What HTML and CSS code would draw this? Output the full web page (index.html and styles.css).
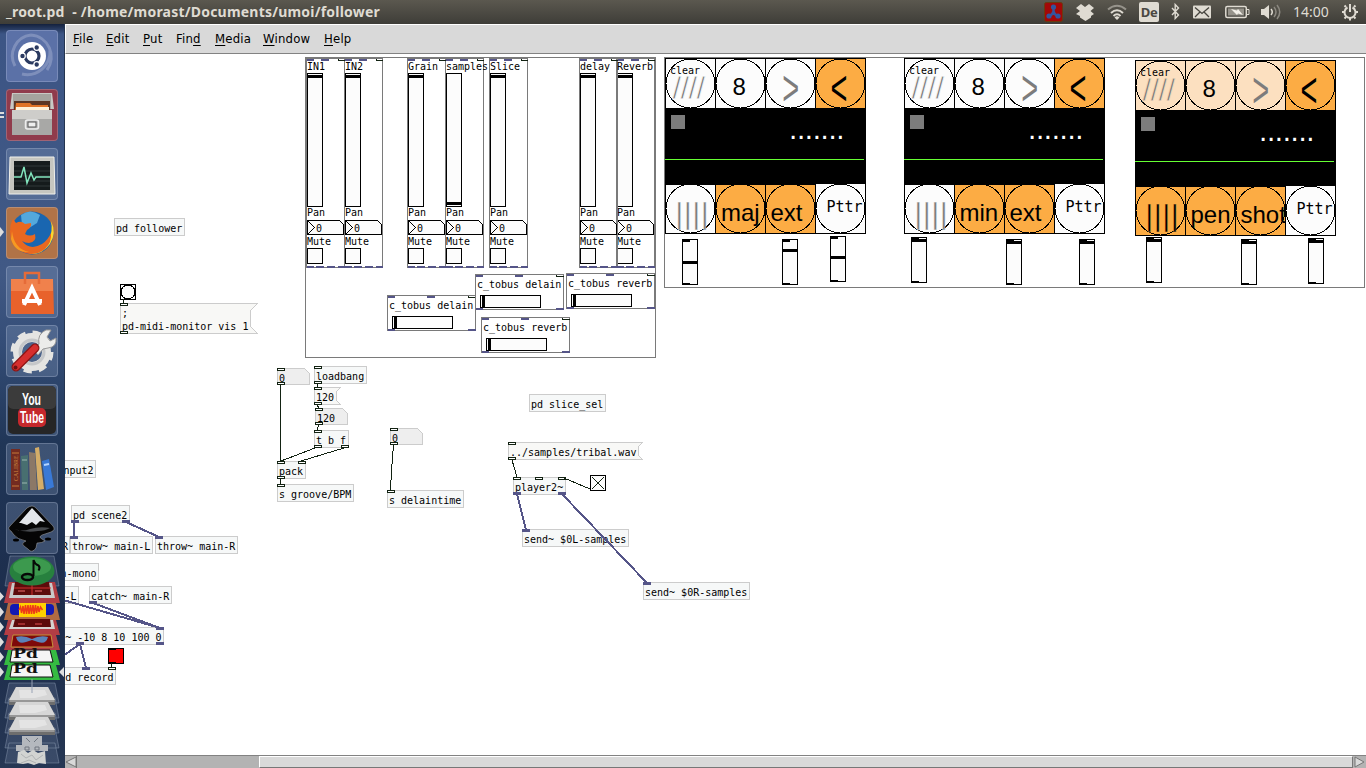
FILE: index.html
```html
<!DOCTYPE html>
<html lang="en">
<head>
<meta charset="utf-8">
<title>_root.pd - /home/morast/Documents/umoi/follower</title>
<link rel="stylesheet" href="styles.css">
</head>
<body>
<header class="panel">
  <h1 class="panel-title">_root.pd&nbsp; - /home/morast/Documents/umoi/follower</h1>
  <div class="tray">
    <svg width="20" height="20" viewBox="0 0 20 20"><rect x=".5" y=".5" width="18" height="19" rx="2" fill="#a30808" stroke="#6b3a10"/><path d="M9.500 3v8M9.500 11l-5 4M9.500 11l5 4" stroke="#34549c" stroke-width="2.500"/><g fill="#34549c"><circle cx="9.500" cy="5" r="2.600"/><circle cx="5" cy="14" r="2.600"/><circle cx="14" cy="14" r="2.600"/><circle cx="9.500" cy="11" r="2"/></g></svg>
    <svg width="20" height="20" viewBox="0 0 20 20"><path d="M5 2l4 3 4-3 5 4-3.500 3L18 12l-3 2v1.500L9.500 19 4 15.500V14l-4-2 4-3-4-3z" fill="#dfdbd2"/></svg>
    <svg width="21" height="20" viewBox="0 0 21 20" fill="none" stroke-width="2"><path d="M1 7.500Q10 0 19 7.500" stroke="#96938b"/><path d="M4 11Q10 5.500 16 11M6.500 14Q10 10.500 13.500 14" stroke="#dfdbd2"/><path d="M7.500 15.500Q10 13 12.500 15.500L10 18z" fill="#dfdbd2" stroke="none"/></svg>
    <span class="keyboard">De</span>
    <svg width="10" height="20" viewBox="0 0 10 20"><path d="M1 6l6.500 7L4.200 16.500v-14L7.500 6 1 13" fill="none" stroke="#dfdbd2" stroke-width="1.400"/></svg>
    <svg width="19" height="20" viewBox="0 0 19 20"><rect y="3.500" width="18" height="13" rx="1" fill="#dfdbd2"/><path d="M2 5.500l7 6 7-6M2 15l5-5M16 15l-5-5" fill="none" stroke="#45433d" stroke-width="1.300"/></svg>
    <svg width="25" height="20" viewBox="0 0 25 20"><rect x=".8" y="4.500" width="20.500" height="11" rx="1.500" fill="none" stroke="#dfdbd2" stroke-width="1.500"/><rect x="3" y="6.500" width="16" height="7" fill="#96938b"/><path d="M22 7.500h2v5h-2" fill="none" stroke="#dfdbd2"/><path d="M6 7l6 1.500 1-1.500 5 6-5-1.500L12 13z" fill="#f2efe8"/></svg>
    <svg width="20" height="20" viewBox="0 0 20 20"><path d="M0 7h3l5-4v14l-5-4H0z" fill="#dfdbd2"/><path d="M10 7q2.500 3 0 6" fill="none" stroke="#dfdbd2" stroke-width="1.500"/><path d="M13 5q4 5 0 10M16 3q5.500 7 0 14" fill="none" stroke="#8b8880" stroke-width="1.500"/></svg>
    <span class="clock">14:00</span>
    <svg width="17" height="20" viewBox="0 0 17 20" fill="none" stroke="#dfdbd2"><path d="M5.500 5.500a5.500 5.500 0 1 0 5 0" stroke-width="2"/><path d="M8 2v8" stroke-width="2"/><path d="M2.500 3.500L4 5M13.500 3.500L12 5M0 10h2M14 10h2M2.500 16.500L4 15M13.500 16.500L12 15M8 16v2.500" stroke-width="2"/></svg>
  </div>
</header>
<div class="desktop">
  <aside class="launcher">
    <svg class="tile dash" viewBox="0 0 52 52"><path d="M9 36A21 21 0 0 1 25 5M16 44A23 23 0 0 0 44 20M25 5a22 22 0 0 1 16 35" fill="none" stroke="#bfc9e2" stroke-opacity=".35" stroke-width="3"/><circle cx="26" cy="26" r="14" fill="#fff"/><circle cx="26" cy="26" r="7" fill="none" stroke="#2b3a60" stroke-width="3.200"/><g fill="#2b3a60" stroke="#fff" stroke-width="1.200"><circle cx="16.500" cy="26" r="2.800"/><circle cx="30.700" cy="17.500" r="2.800"/><circle cx="30.700" cy="34.500" r="2.800"/></g></svg>
    <svg class="tile files" viewBox="0 0 52 52"><path d="M6 4h40l2 16H4z" fill="#c9c8c4"/><path d="M7 5h38v15H7z" fill="#a5a39e"/><path d="M8 12h36v9H8z" fill="#5a3524"/><path d="M10 14h14l2 2h16v5H9z" fill="#e07327"/><path d="M10 18h33v4H10z" fill="#fff1d8"/><path d="M6 21h40v25H6z" fill="#a8a8a6"/><path d="M6 21h40v9H6z" fill="#cecdca"/><rect x="19.500" y="31" width="13" height="9" rx="2" fill="#bbb" stroke="#ececec" stroke-width="1.500"/><rect x="22" y="33" width="8" height="5" fill="#eee" stroke="#555"/></svg>
    <svg class="tile" viewBox="0 0 52 52"><path d="M4 9h44l1 37H3z" fill="#c6c6c0" stroke="#f0f0ec"/><path d="M8 13h36v29H8z" fill="#151b1c"/><path d="M8 18h36M8 23h36M8 28h36M8 33h36M8 38h36" stroke="#303939"/><path d="M8 29h7l3-10 3 16 4-10 3 7 2-3h14" fill="none" stroke="#82e5bd" stroke-width="1.500"/></svg>
    <svg class="tile firefox" viewBox="0 0 52 52"><circle cx="26" cy="26" r="21.500" fill="#1a66b0"/><path d="M15 8q9-7 19 0l-3 8-8 5-7-3z" fill="#53a8dc"/><path d="M45 14q6 12-1 23-8 11-21 10 14-4 20-15 4-8 2-18z" fill="#ffd62a"/><path d="M7 12l3 4q5-3 9 1l6-1q1 4-4 7l-2 4q5 3 10 0 2 8-6 9-4 0-7-2 8 10 20 3 6-4 9-11 1 9-6 16-9 7-20 4Q4 41 4 25q0-8 3-13z" fill="#e96820"/><path d="M6 24q2 18 17 21-14 1-18-13z" fill="#f79a22"/></svg>
    <svg class="tile" viewBox="0 0 52 52"><path d="M5 13h42l1 35H5z" fill="#e8622b"/><path d="M5 13h42v12H5z" fill="#f0814c"/><path d="M19 18V7h14v11" fill="none" stroke="#e66b38" stroke-width="2.500"/><path d="M18 39l8-17 8 17M16 35h20" fill="none" stroke="#fff" stroke-width="4"/></svg>
    <svg class="tile" viewBox="0 0 52 52"><circle cx="26" cy="27" r="14.500" fill="none" stroke="#e4e4e2" stroke-width="9"/><circle cx="26" cy="27" r="19" fill="none" stroke="#e4e4e2" stroke-width="5" stroke-dasharray="8 6.920"/><circle cx="26" cy="27" r="12" fill="none" stroke="#c5c7c9" stroke-width="3"/><path d="M28 25l5-6q-2-10 7-14l5 0-4 7 3 4 6-3q1 9-8 10l-5 1-5 6z" fill="#ececea" stroke="#999"/><path d="M10 42l19-19" stroke="#8d1515" stroke-width="9" stroke-linecap="round"/><path d="M10 42l19-19" stroke="#d52e2e" stroke-width="6.500" stroke-linecap="round"/><circle cx="9.500" cy="42.500" r="2" fill="#701010"/></svg>
    <svg class="tile" viewBox="0 0 52 52"><rect x="2" y="2" width="48" height="48" rx="5" fill="#262626"/><rect x="2" y="2" width="48" height="23" rx="5" fill="#3b3b3b"/><rect x="12" y="24" width="28" height="19" rx="5" fill="#c5282c"/><text x="16" y="21" class="yt" textLength="19" lengthAdjust="spacingAndGlyphs">You</text><text x="14" y="39" class="yt" textLength="24" lengthAdjust="spacingAndGlyphs">Tube</text></svg>
    <svg class="tile" viewBox="0 0 52 52"><path d="M5 6h9v41H5z" fill="#732b20"/><path d="M6 10h7M6 43h7" stroke="#c77b3b"/><path d="M15 13l7-1v35h-6z" fill="#486f70"/><path d="M16 17h5M16 40h5" stroke="#9bb8b0"/><path d="M23 9l6 1 2 37h-7z" fill="#8b7867"/><path d="M29 5l4-1 5 42-6 1z" fill="#d4ad68"/><path d="M36 18l7-2 5 28-8 3z" fill="#3979d6"/><path d="M38 22l5-1" stroke="#b4d4ff" stroke-width="2"/><text class="spine" transform="translate(12 38) rotate(-90)">CALIBRE</text></svg>
    <svg class="tile" viewBox="0 0 52 52"><path d="M26 4q2 0 4 2l17 18q3 4-2 6l-9 3q-4 2 0 4l3 2q-3 2-8 2l-1 5q-4 6-8 1l-4-3q-3-2 0-4l2-1q-9-2-12-6L5 29q-4-2-1-5L21 6q3-2 5-2z" fill="#050505" stroke="#aaa" stroke-opacity=".5"/><path d="M26 6l13 14-5-1-4 4-4-3-5 3-6-2-2 0z" fill="#e3e6ea"/><path d="M8 27q8 3 16 0 10-3 20-1-5 3-12 3-12 2-24-2z" fill="#46494d"/><ellipse cx="10" cy="38" rx="3" ry="1.500"/><ellipse cx="42" cy="37" rx="3" ry="1.500"/></svg>
    <svg class="stack" viewBox="0 554 65 214">
      <path class="glass" d="M10 556h44l5 30H5z"/>
      <path d="M9 582h46l5 21H4z" fill="#b33d44"/>
      <path d="M12 583h40l3 15H9z" fill="#c9c9c9"/><path d="M15 582h34l2 13H13z" fill="#5c0b0b"/><path d="M32 582v13M14 588h37" stroke="#d03030"/><path d="M18 591h7M35 591h7" stroke="#ec7070"/>
      <ellipse cx="32" cy="571" rx="22.500" ry="14.500" fill="#27803e"/><ellipse cx="32" cy="567" rx="19" ry="9" fill="#3c994e"/>
      <path d="M33.500 576V560q1 4 5 5.500 2 2 0 5" fill="none" stroke="#060806" stroke-width="2"/><ellipse cx="27.500" cy="577" rx="5.500" ry="3" fill="none" stroke="#060806" stroke-width="2.500"/>
      <path d="M8 603h48l4 17H4z" fill="#b06b42"/><rect x="10" y="604" width="44" height="11" rx="4" fill="#1219b2"/><path d="M19 603h27v14H19z" fill="#ffd000"/><path d="M19 610l1.500-3 1 6 1.500-7 1 8 1.500-9 1 9 1.500-9 1 9 1.500-9 1 9 1.500-9 1 9 1.500-9 1 8 1.500-7 1 6 1.500-5 2 3" fill="none" stroke="#ee3a19" stroke-width="1.500"/>
      <path d="M8 620h48l4 15H4z" fill="#b33d44"/><path d="M12 620h41l2 9H9z" fill="#d5d2d0"/><path d="M15 619h35l1 8H13z" fill="#5c0b0b"/><path d="M18 624h7M35 624h7" stroke="#e05050"/>
      <path d="M8 635h48l4 15H4z" fill="#b33d44"/><path d="M13 635h38l2 12H11z" fill="#7e0909" stroke="#c29339"/><path d="M16 637q8-2 16 2 8-4 16-2-2 8-10 5l-6-2-6 2q-8 3-10-5z" fill="#5b82b8"/>
      <path d="M8 650h48l4 15H4z" fill="#35bb42"/><path d="M12 650h38l3 12H10z" fill="#f5f5f5" stroke="#111"/>
      <path d="M8 665h48l4 15H4z" fill="#35bb42"/><path d="M12 665h38l3 12H10z" fill="#f5f5f5" stroke="#111"/>
      <text x="13" y="658" class="pd" textLength="25" lengthAdjust="spacingAndGlyphs">Pd</text><text x="13" y="673" class="pd" textLength="25" lengthAdjust="spacingAndGlyphs">Pd</text>
      <path class="glass" d="M9 683h46l4 20H5zM9 698h46l4 20H5zM9 713h46l4 20H5zM9 728h46l4 20H5zM9 743h46l4 20H5z"/>
      <g id="drive"><path d="M16 687h32l7 13v5H9v-5z" fill="#6d6d6d"/><path d="M16 687h32l7 13H9z" fill="#d6d6d6"/><path d="M19 690h26l2 5-12 3H20z" fill="#e4e4e4"/><path d="M9.500 701h45" stroke="#c4c4c4"/></g>
      <use href="#drive" y="15"/><use href="#drive" y="30"/>
      <path d="M32 679v14" stroke="#98a2b5"/>
      <path d="M22 736h20v9H22zM16 745h32v6H16z" fill="#b4b8be"/><path d="M26 738l4 4M38 738l-4 4M25 747h4v3h-4zM35 747h4v3h-4z" fill="none" stroke="#707780"/><path d="M18 752l6-2 4 3 5-3 5 3 7-2 1 13-7-1-5 2-6-2-5 1-6-1z" fill="#d2d4d2"/><path d="M21 754l5 4 6-3 4 5 7-5M21 763l8-3 7 3" stroke="#b0b3b4" fill="none"/>
      <g fill="#dedede"><path d="M0 592l4 4.500-4 4.500zM0 607l4 5-4 5zM0 622l4 5-4 5zM0 637l4 5-4 5zM0 652l4 5-4 5zM0 667l4 5-4 5zM64 667l-5 5 5 5z"/></g>
    </svg>
    <svg class="running" viewBox="0 0 6 130"><path d="M0 3h4M0 7h4" stroke="#ddd" stroke-width="2"/><path d="M0 117l4 5-4 5z" fill="#ddd"/></svg>
  </aside>
  <main class="window">
    <nav class="menubar"><span><u>F</u>ile</span><span><u>E</u>dit</span><span><u>P</u>ut</span><span>Fin<u>d</u></span><span><u>M</u>edia</span><span><u>W</u>indow</span><span><u>H</u>elp</span></nav>
    <svg class="patch" viewBox="65 54 1301 701">
      <defs>
        <g id="nlet"><rect x="0" y="0" width="7" height="2" class="nlet"/></g>
        <g id="sig"><rect x="-.500" y="-.500" width="8" height="3" class="sig"/></g>
        <g id="strip">
          <rect width="38" height="209" class="gop"/>
          <path d="M.500 1.500h7M14.500 1.500h8" class="sigline"/><path d="M31.500 .500v1.500h7" class="line"/>
          <path d="M.500 208.500h7M9.500 208.500h8M20.500 208.500h8M31 208.500h7" class="sigline"/>
          <rect x="1" y="15" width="15" height="133" class="ctl"/>
          <path d="M1 162h32l4 4v10H1zM1 162l7 7-7 7" class="ctl"/>
          <rect x="1" y="190" width="15" height="15" class="ctl"/>
          <text x=".500" y="157.500">Pan</text><text x="9.500" y="173.500">0</text><text x=".500" y="186.500">Mute</text>
        </g>
        <g id="knob"><rect x="1.500" y="16.500" width="14" height="3"/></g>
        <g id="bus">
          <rect width="88" height="35" class="gop white"/>
          <path d="M0 1.500h7.500M39.500 1.500h8M0 34h7.500M80.500 34h7.500" class="sigline"/><path d="M81 0v2h7" class="line"/>
          <rect x="5" y="21" width="60" height="12" class="ctl"/><rect x="6.500" y="21" width="3" height="12"/>
        </g>
        <g id="cell"><rect width="50" height="50"/><circle cx="25" cy="25" r="24.500"/></g>
        <g id="screen">
          <rect x="-.500" y="49.500" width="201" height="76.500" fill="#000"/>
          <rect x="5.500" y="56.500" width="14" height="14" fill="#7c7c7c"/>
          <path d="M-.500 101h199" stroke="#66ff33"/>
          <text x="122.500" y="80.500" class="dots" textLength="57.500">.......</text>
          <text x="4.500" y="15.500" textLength="30">clear</text>
          <text x="7" y="40" class="slashes dim" textLength="32.500">////</text>
          <text x="67" y="36.500" class="big">8</text>
          <text class="chev dim" transform="translate(116.700 46) scale(1 1.700)">&gt;</text>
          <text class="chev" transform="translate(165 46) scale(1 1.700)">&lt;</text>
        </g>
        <g id="pttr"><use href="#cell" x="150" y="125" class="pale"/><text x="161" y="153" class="pttr">Pttr</text></g>
        <g id="vs"><rect width="15" height="45" class="ctl"/><path d="M0 1h7.500M0 44.500h7.500" class="thick"/></g>
      </defs>

      <rect x="305.500" y="57.500" width="350" height="300" class="gop"/>
      <use href="#strip" x="616.500" y="58.500"/><use href="#strip" x="579.500" y="58.500"/><use href="#strip" x="489.500" y="58.500"/><use href="#strip" x="445.500" y="58.500"/><use href="#strip" x="407.500" y="58.500"/><use href="#strip" x="344.500" y="58.500"/><use href="#strip" x="306.500" y="58.500"/>
      <use href="#knob" x="306" y="58.500"/><use href="#knob" x="344" y="58.500"/><use href="#knob" x="407" y="58.500"/><use href="#knob" x="445" y="185.500"/><use href="#knob" x="489" y="58.500"/><use href="#knob" x="579" y="58.500"/><use href="#knob" x="616" y="58.500"/>
      <text x="307" y="70">IN1</text><text x="345" y="70">IN2</text><text x="408" y="70">Grain</text><text x="446" y="70">samples</text><text x="490" y="70">Slice</text><text x="580" y="70">delay</text><text x="617" y="70">Reverb</text>
      <use href="#bus" x="387.500" y="295.500"/><text x="389" y="309">c_tobus delain</text>
      <use href="#bus" x="475.500" y="274.500"/><text x="477" y="288">c_tobus delain</text>
      <use href="#bus" x="566.500" y="273.500"/><text x="568" y="287">c_tobus reverb</text>
      <use href="#bus" x="481.500" y="317.500"/><text x="483" y="331">c_tobus reverb</text>

      <rect x="664.500" y="57.500" width="700" height="230" class="gop"/>
      <g transform="translate(665.500 58.500)">
        <use href="#cell" class="pale"/><use href="#cell" x="50" class="pale"/><use href="#cell" x="100" class="pale"/><use href="#cell" x="150" class="amber"/>
        <use href="#cell" y="125" class="pale"/><use href="#cell" x="50" y="125" class="amber"/><use href="#cell" x="100" y="125" class="amber"/><use href="#screen"/>
        <text x="10" y="165" class="bars dim" textLength="33">||||</text><text x="55.500" y="162" class="big">maj</text><text x="105" y="162" class="big">ext</text><use href="#pttr"/>
      </g>
      <g transform="translate(904.500 58.500)">
        <use href="#cell" class="pale"/><use href="#cell" x="50" class="pale"/><use href="#cell" x="100" class="pale"/><use href="#cell" x="150" class="amber"/>
        <use href="#cell" y="125" class="pale"/><use href="#cell" x="50" y="125" class="amber"/><use href="#cell" x="100" y="125" class="amber"/><use href="#screen"/>
        <text x="10" y="165" class="bars dim" textLength="33">||||</text><text x="55" y="162" class="big">min</text><text x="105" y="162" class="big">ext</text><use href="#pttr"/>
      </g>
      <g transform="translate(1135.500 60.500)">
        <use href="#cell" class="peach"/><use href="#cell" x="50" class="peach"/><use href="#cell" x="100" class="peach"/><use href="#cell" x="150" class="amber"/>
        <use href="#cell" y="125" class="amber"/><use href="#cell" x="50" y="125" class="amber"/><use href="#cell" x="100" y="125" class="amber"/><use href="#screen" class="on-peach"/>
        <text x="10" y="165" class="bars on-amber" textLength="33">||||</text><text x="55" y="162" class="big">pen</text><text x="105" y="162" class="big">shot</text><use href="#pttr"/>
      </g>
      <use href="#vs" x="682.500" y="239.500"/><use href="#vs" x="782.500" y="239.500"/><use href="#vs" x="830.500" y="236.500"/><use href="#vs" x="911.500" y="237.500"/><use href="#vs" x="1006.500" y="239.500"/><use href="#vs" x="1079.500" y="239.500"/><use href="#vs" x="1146.500" y="237.500"/><use href="#vs" x="1241.500" y="239.500"/><use href="#vs" x="1308.500" y="238.500"/>
      <path class="knobs" d="M682 262.500h16M782 250.500h16M830 257.500h16M911 240.500h16M1006 242.500h16M1079 242.500h16M1146 240.500h16M1241 242.500h16M1308 241.500h16"/>

      <g class="obj">
        <path d="M114.500 218.500h70v17h-70zM50.500 460.500h45v17h-45zM71.500 505.500h58v17h-58zM50.500 536.500h19v17h-19zM70.500 536.500h82v17h-82zM155.500 536.500h82v17h-82zM50.500 563.500h48v17h-48zM50.500 586.500h28v17h-28zM89.500 586.500h82v17h-82zM50.500 627.500h113v17h-113zM50.500 667.500h65v17h-65z"/>
        <path d="M314.500 366.500h52v17h-52zM314.500 430.500h34v17h-34zM277.500 461.500h28v17h-28zM277.500 484.500h76v17h-76zM387.500 490.500h76v17h-76zM529.500 394.500h76v17h-76zM513.500 477.500h52v17h-52zM522.500 529.500h106v17h-106zM643.500 582.500h106v17h-106z"/>
      </g>
      <g class="msg"><path d="M120.500 303.500h137l-7 7v16l7 7h-137zM314.500 387.500h26l-4 4v9l4 4h-26zM508.500 442.500h134l-4 4v9l4 4h-134z"/></g>
      <g class="atom"><path d="M277.500 368.500h27l5 5v11h-32zM315.500 408.500h27l5 5v11h-32zM390.500 428.500h27l5 5v11h-32z"/></g>
      <rect x="120.500" y="284.500" width="15" height="15" class="ctl"/><circle cx="128" cy="292" r="7" class="ctl"/>
      <rect x="108.500" y="648.500" width="15" height="15" fill="#f00" stroke="#000"/><path d="M108.500 649.500h7.500M108.500 662.500h7.500" stroke="#000"/>
      <rect x="590.500" y="475.500" width="15" height="15" class="ctl"/><path d="M592 477l12 12M604 477l-12 12" class="line"/>

      <text x="116" y="232">pd follower</text><text x="122" y="317">;</text><text x="122" y="330">pd-midi-monitor vis 1</text>
      <g text-anchor="end"><text x="93.500" y="474">nput2</text><text x="68" y="550">R</text><text x="96.500" y="577">n-mono</text><text x="76.500" y="600">-L</text><text x="161.500" y="641">~ -10 8 10 100 0</text><text x="113.500" y="681">d record</text></g>
      <text x="73" y="519">pd scene2</text><text x="72" y="550">throw~ main-L</text><text x="157" y="550">throw~ main-R</text><text x="91" y="600">catch~ main-R</text>
      <text x="279" y="382">0</text><text x="316" y="380">loadbang</text><text x="316" y="401">120</text><text x="317" y="422">120</text><text x="316" y="444">t b f</text><text x="279" y="475">pack</text><text x="279" y="498">s groove/BPM</text>
      <text x="392" y="442">0</text><text x="389" y="504">s delaintime</text><text x="531" y="408">pd slice_sel</text><text x="510" y="456">../samples/tribal.wav</text><text x="515" y="491">player2~</text><text x="524" y="543">send~ $0L-samples</text><text x="645" y="596">send~ $0R-samples</text>

      <use href="#nlet" x="120.500" y="303.500"/><use href="#nlet" x="120.500" y="331.500"/><use href="#nlet" x="108.500" y="667.500"/>
      <use href="#nlet" x="277.500" y="368.500"/><use href="#nlet" x="277.500" y="382.500"/><use href="#nlet" x="314.500" y="366.500"/><use href="#nlet" x="314.500" y="381.500"/><use href="#nlet" x="314.500" y="387.500"/><use href="#nlet" x="314.500" y="402.500"/><use href="#nlet" x="315.500" y="408.500"/><use href="#nlet" x="315.500" y="422.500"/><use href="#nlet" x="314.500" y="430.500"/><use href="#nlet" x="314.500" y="445.500"/><use href="#nlet" x="341.500" y="445.500"/><use href="#nlet" x="277.500" y="461.500"/><use href="#nlet" x="298.500" y="461.500"/><use href="#nlet" x="277.500" y="476.500"/><use href="#nlet" x="277.500" y="484.500"/>
      <use href="#nlet" x="390.500" y="428.500"/><use href="#nlet" x="390.500" y="442.500"/><use href="#nlet" x="387.500" y="490.500"/><use href="#nlet" x="508.500" y="442.500"/><use href="#nlet" x="508.500" y="457.500"/><use href="#nlet" x="513.500" y="477.500"/><use href="#nlet" x="535.500" y="477.500"/><use href="#nlet" x="558.500" y="477.500"/>
      <use href="#sig" x="71.500" y="520.500"/><use href="#sig" x="122.500" y="520.500"/><use href="#sig" x="70.500" y="536.500"/><use href="#sig" x="155.500" y="536.500"/><use href="#sig" x="89.500" y="601.500"/><use href="#sig" x="156.500" y="627.500"/><use href="#sig" x="76.500" y="642.500"/><use href="#sig" x="156.500" y="642.500"/><use href="#sig" x="82.500" y="667.500"/><use href="#sig" x="513.500" y="492.500"/><use href="#sig" x="558.500" y="492.500"/><use href="#sig" x="522.500" y="529.500"/><use href="#sig" x="643.500" y="582.500"/>
      <path class="line" d="M123.500 299v5M111.500 663v4M280.500 385v76M317.500 384v3M317.500 405l1 3M318.500 425l-1 5M315 448l-34 13M344 448l-43 13M280.500 479v5M393.500 445l-2 26-1 19M512 460l5 17M564 478l26 11"/>
      <path class="cord" d="M74 522v15M126 522l33 15M93 603l67 25M60 599l100 29M80 644l6 24M80 644l-20 14M517 494l9 36M562 494l85 89"/>
    </svg>
    <div class="scrollbar"><svg width="12" height="12" viewBox="0 0 12 12"><path d="M11.500 0v12" stroke="#777"/><path d="M11 1v10L1 6z" fill="#d9d9d9" stroke="#777"/></svg><span class="thumb"></span><svg width="13" height="12" viewBox="0 0 13 12"><path d="M2 1v10l9-5z" fill="#d9d9d9" stroke="#777"/></svg></div>
  </main>
</div>
</body>
</html>
```
FILE: styles.css
```css
* { box-sizing: border-box; }
body { margin: 0; width: 1366px; height: 768px; overflow: hidden; background: #fff; display: flex; flex-direction: column; }
svg { display: block; }

.panel { height: 24px; flex: none; display: flex; align-items: center; justify-content: space-between; background: linear-gradient(#5b584f, #3e3d38); color: #dfdbd2; padding-left: 6px; }
.panel-title { margin: 0; font: bold 14px/24px "Noto Sans", sans-serif; white-space: pre; width: 390px; letter-spacing: .21px; }
.tray { display: grid; grid-template-columns: 32px 31px 32px 32px 22px 32px 36px 32px 49px 24px; align-items: center; width: 322px; }
.keyboard { width: 20px; height: 20px; border-radius: 2px; background: #dfdbd2; color: #4a4842; font: bold 13px/20px "Noto Sans", sans-serif; text-align: center; letter-spacing: -.5px; }
.clock { font: 14px/24px "Noto Sans", sans-serif; }

.desktop { display: flex; flex: 1; min-height: 0; }
.launcher { position: relative; width: 65px; flex: none; display: flex; flex-direction: column; align-items: center; padding: 6px 1px 0 0; gap: 7px; background: linear-gradient(#14213d, #3c5585 10px, #415985 250px, #344d77 320px, #203657 420px, #1c2c4b 600px, #263754); border-right: 1px solid #24344f; }
.tile { width: 52px; height: 52px; flex: none; border-radius: 4px; background: rgba(150, 170, 205, .25); box-shadow: inset 0 0 0 1px rgba(210, 220, 240, .25); }
.dash { background: #5b71a7; }
.files { background: #903b4c; }
.firefox { background: #b17347; }
.stack { width: 65px; height: 214px; flex: none; margin-top: -7px; align-self: flex-start; }
.glass { fill: #8c9cb8; fill-opacity: .2; stroke: #a9b6cc; stroke-opacity: .35; }
.running { position: absolute; left: 0; top: 86px; width: 6px; height: 130px; }
.yt { font: bold 16px "Liberation Sans", sans-serif; fill: #fff; }
.spine { font: 6px "Liberation Serif", serif; fill: #d08a42; }
.pd { font: bold 12px "DejaVu Serif", serif; fill: #111; }

.window { flex: 1; min-width: 0; display: flex; flex-direction: column; }
.menubar { height: 30px; flex: none; background: #d9d9d9; border-top: 1px solid #fff; border-left: 1px solid #fff; border-bottom: 1px solid #828282; display: grid; grid-template-columns: 33px 37px 33px 39px 48px 61px auto; padding-left: 7px; font: 13px/27px "DejaVu Sans Condensed", "DejaVu Sans", sans-serif; font-stretch: condensed; letter-spacing: .2px; color: #000; }
.menubar u { text-underline-offset: 2px; }

.patch { --ground: #fcfcfc; width: 1301px; height: 701px; flex: none; background: #fff; shape-rendering: crispEdges; font: 10px "DejaVu Sans Mono", monospace; }
.patch text { white-space: pre; }
.gop { fill: none; stroke: #7a7a7a; }
.white { fill: #fff; }
.ctl { fill: #fcfcfc; stroke: #000; }
.nlet { fill: #fff; stroke: #122212; }
.sig { fill: #555588; }
.sigline { fill: none; stroke: #555588; stroke-width: 2; }
.line { fill: none; stroke: #122212; }
.cord { fill: none; stroke: #555588; stroke-width: 2; }
.thick { fill: none; stroke: #000; stroke-width: 2; }
.knobs { fill: none; stroke: #000; stroke-width: 3; }
.obj { fill: #f6f8f8; stroke: #ccc; }
.msg { fill: #f8f8f6; stroke: #ccc; }
.atom { fill: #eee; stroke: #ccc; }
.pale, .amber, .peach { stroke: #000; }
.pale { fill: #fcfcfc; }
.amber { fill: #fcac44; }
.peach { fill: #fce0c0; }
.on-peach { --ground: #fce0c0; }
.on-amber { --ground: #fcac44; }
.big { font: 24px "Liberation Sans", sans-serif; }
/* A ground-coloured outline thins these glyphs to hairlines. */
.slashes { font: 31px "Liberation Sans", sans-serif; stroke: var(--ground); stroke-width: .8px; }
.bars { font: 29px "Liberation Sans", sans-serif; stroke: var(--ground); stroke-width: .3px; }
.chev { font: 29px "Liberation Sans", sans-serif; }
.dim { fill: #7c7c7c; }
.pttr { font-size: 15px; }
.dots { font: bold 17px "DejaVu Sans Mono", monospace; fill: #fff; }

.scrollbar { height: 13px; flex: none; display: flex; border-top: 1px solid #828282; background: #b3b3b3; }
.thumb { flex: 1; margin-left: 182px; background: #d9d9d9; border: 1px solid #fff; border-right-color: #777; border-bottom-color: #777; }
```
